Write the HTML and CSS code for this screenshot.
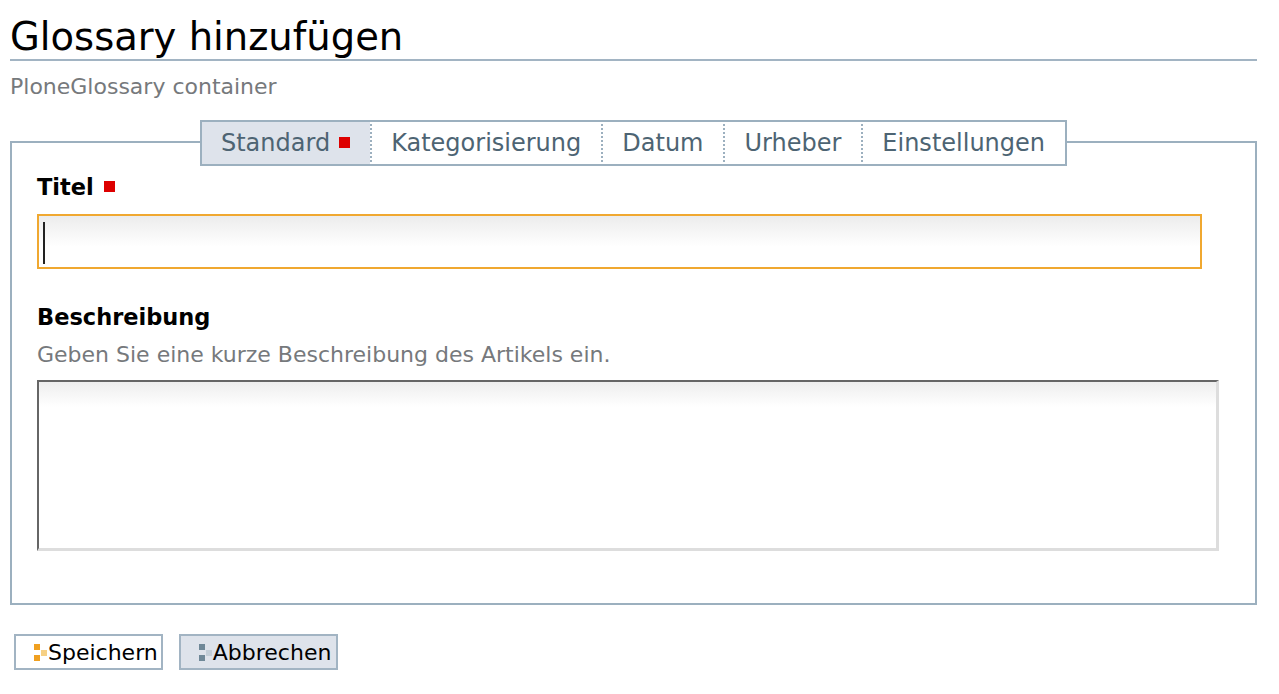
FILE: index.html
```html
<!DOCTYPE html>
<html lang="de">
<head>
<meta charset="utf-8">
<title>Glossary hinzufügen</title>
<link rel="stylesheet" href="styles.css">
</head>
<body>
<div class="page">
  <h1 class="heading">Glossary hinzufügen</h1>
  <p class="subtitle">PloneGlossary container</p>

  <div class="fieldset">
    <div class="tabs">
      <span class="tab active">Standard<span class="req"></span></span>
      <span class="tab">Kategorisierung</span>
      <span class="tab">Datum</span>
      <span class="tab">Urheber</span>
      <span class="tab">Einstellungen</span>
    </div>

    <div class="field">
      <label class="label">Titel<span class="req"></span></label>
      <div class="input focused"><span class="caret"></span></div>
    </div>

    <div class="field field-desc">
      <label class="label">Beschreibung</label>
      <div class="help">Geben Sie eine kurze Beschreibung des Artikels ein.</div>
      <div class="textarea"></div>
    </div>
  </div>

  <div class="buttons">
    <button class="btn btn-save"><span class="ico"><i class="a"></i><i class="b"></i><i class="c"></i></span>Speichern</button>
    <button class="btn btn-cancel"><span class="ico"><i class="a"></i><i class="b"></i><i class="c"></i></span>Abbrechen</button>
  </div>
</div>
</body>
</html>
```

FILE: styles.css
```css
* { box-sizing: border-box; }
html, body { margin: 0; padding: 0; background: #fff; }
body { font-family: "DejaVu Sans", "Liberation Sans", sans-serif; color: #000; }

.page { padding: 0 22px 0 10px; }

.heading {
  margin: 0;
  padding-top: 15px;
  font-size: 38.5px;
  font-weight: normal;
  line-height: 44px;
  border-bottom: 2px solid #a2b4c3;
  height: 61px;
  white-space: nowrap;
}

.subtitle {
  margin: 13px 0 0;
  font-size: 22px;
  line-height: 26px;
  color: #76797c;
}

.fieldset {
  margin-top: 41px;
  border: 2px solid #9cb0bf;
  height: 464px;
  padding: 0 38px 0 25px;
}

.tabs {
  display: flex;
  justify-content: center;
  margin-top: -23px;
  margin-left: -25px;
  margin-right: -38px;
}
.tab {
  display: flex;
  align-items: center;
  height: 46px;
  padding: 0 20px 1px 19px;
  font-size: 24px;
  color: #4d6473;
  background: #fff;
  border-top: 2px solid #9cb0bf;
  border-bottom: 2px solid #9cb0bf;
  border-left: 2px dotted #9cb0bf;
  white-space: nowrap;
}
.tab:first-child { border-left: 2px solid #9cb0bf; }
.tab:last-child { border-right: 2px solid #9cb0bf; }
.tab.active { background: #dee3eb; }
.tab .req { margin-left: 9px; }

.req {
  display: inline-block;
  width: 11px;
  height: 11px;
  background: #dd0000;
  vertical-align: middle;
}

.field { margin-top: 7px; }
.label {
  display: block;
  font-size: 22.5px;
  font-weight: bold;
  line-height: 28px;
}
.label .req { margin-left: 10px; position: relative; top: -2px; }

.input {
  margin-top: 13px;
  height: 55px;
  width: 1165px;
  border: 2px solid #f0a830;
  background: linear-gradient(#ececec, #fff 60%);
  padding: 6px 0 0 4px;
}
.caret {
  display: block;
  width: 2px;
  height: 42px;
  background: #222;
}

.field-desc { margin-top: 34px; }
.help {
  margin-top: 11px;
  font-size: 22px;
  line-height: 26px;
  color: #76797c;
  white-space: nowrap;
}
.textarea {
  margin-top: 12px;
  width: 1182px;
  height: 171px;
  border-top: 2px solid #666;
  border-left: 2px solid #666;
  border-right: 3px solid #ddd;
  border-bottom: 3px solid #ddd;
  background: linear-gradient(#eeeeee, #fff 25px);
}

.buttons {
  display: flex;
  gap: 16px;
  margin-top: 29px;
  padding-left: 4px;
}
.btn {
  display: flex;
  align-items: center;
  height: 36px;
  padding: 0 3px 0 18px;
  font-family: "DejaVu Sans", "Liberation Sans", sans-serif;
  font-size: 22px;
  color: #000;
  border: 2px solid #a2b4c3;
  background: #fff;
}
.btn-cancel { background: #dee3eb; padding-right: 5px; }

.ico {
  position: relative;
  width: 13px;
  height: 17px;
  margin-right: 1px;
}
.ico i { position: absolute; width: 6px; height: 6px; }
.ico .a { left: 0; top: 0; }
.ico .b { left: 0; bottom: 0; }
.ico .c { right: 0; top: 6px; }
.btn-save .a, .btn-save .b { background: #f0a020; }
.btn-save .c { background: #f6d084; }
.btn-cancel .a, .btn-cancel .b { background: #6f8898; }
.btn-cancel .c { background: #c3ced8; }
```
